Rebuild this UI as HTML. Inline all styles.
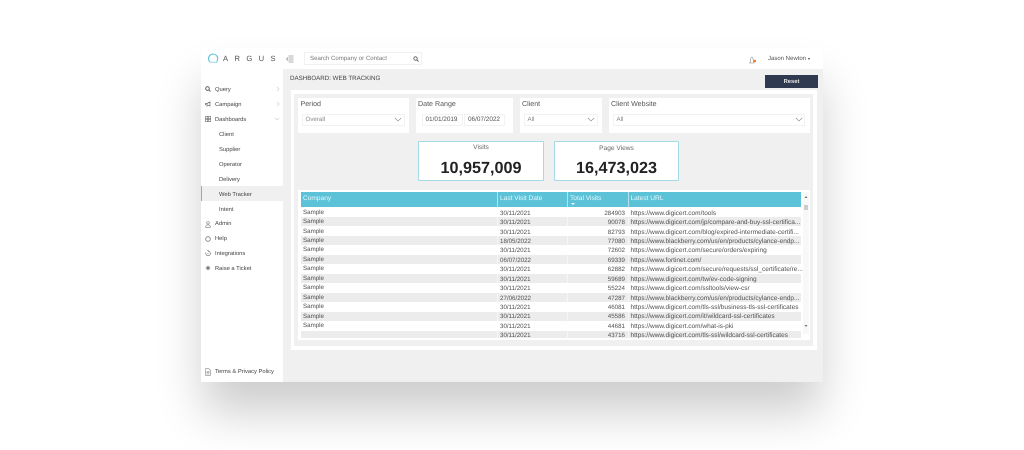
<!DOCTYPE html>
<html><head><meta charset="utf-8"><style>
html,body{margin:0;padding:0;background:#fff}
body{width:1024px;height:450px;overflow:hidden;position:relative;font-family:"Liberation Sans",sans-serif;color:#444;text-rendering:geometricPrecision}
div,svg{position:absolute}
.wrap{left:0;top:0;width:1024px;height:450px;filter:blur(.3px)}
.t{white-space:nowrap;line-height:10px;transform:translateY(1px)}
.nav{font-size:5.8px;color:#444}
.card{background:#fff}
.lab{font-size:7.1px;color:#555}
.sel{background:#fff;border:1px solid #f2f2f2;box-sizing:border-box;height:12px}
.v{font-size:6.2px;color:#888}
.kpi{background:#fff;border:1px solid #a5dbe6;border-radius:1px;box-sizing:border-box;top:141px;height:40px}
.num{font-weight:bold;font-size:16.2px;color:#222;text-align:center;width:100%;top:17px;line-height:18px;transform:none}
.kt{font-size:6.6px;color:#666;text-align:center;width:100%;line-height:10px}
.hd{font-size:6.6px;color:#e9f8fb;top:193px}
.rowbg{left:301px;width:500px;height:9.5px;background:#ececec}
.r{font-size:6.2px;color:#505050}
.u{font-size:6.5px;color:#505050;left:630.5px}
</style></head><body>
<div class="wrap">
<div style="left:201px;top:48px;width:622px;height:334px;background:#f0f0f0;box-shadow:0 32px 44px -2px rgba(0,0,0,.2)"></div>
<div style="left:201px;top:48px;width:622px;height:21px;background:#fff"></div>
<div style="left:201px;top:69px;width:82px;height:313px;background:#fff"></div>

<!-- header -->
<svg style="left:207px;top:52px" width="12" height="12" viewBox="0 0 12 12"><path d="M3 10 A4.6 4.6 0 1 1 9.6 9.6" fill="none" stroke="#59c3db" stroke-width="1.1"/><path d="M3 10.2H10.5" stroke="#59c3db" stroke-width=".6"/></svg>
<div class="t" style="left:223px;top:53px;font-size:7.6px;letter-spacing:6.4px;color:#555">ARGUS</div>
<svg style="left:286px;top:55px" width="8" height="8" viewBox="0 0 8 8"><path d="M2.5 1H7.5M2.5 3H7.5M2.5 5H7.5M2.5 7H7.5M2 2.5L.5 4L2 5.5" fill="none" stroke="#666" stroke-width=".55"/></svg>
<div style="left:304px;top:52px;width:118px;height:13px;background:#fff;border:1px solid #f1f1f1;box-sizing:border-box"></div>
<div class="t" style="left:310px;top:53px;font-size:6.1px;color:#777">Search Company or Contact</div>
<svg style="left:413px;top:55.5px" width="6" height="6" viewBox="0 0 6 6"><circle cx="2.5" cy="2.5" r="1.7" fill="none" stroke="#555" stroke-width=".8"/><path d="M3.8 3.8L5.5 5.5" stroke="#555" stroke-width=".9"/></svg>
<svg style="left:748px;top:56px" width="10" height="8" viewBox="0 0 10 8"><path d="M1 7H6.5M2 6.8C2.8 5 2.3 1 3.9 1C5.3 1 5 5 6 6.8" fill="none" stroke="#888" stroke-width=".6"/><circle cx="6.8" cy="5" r="1.3" fill="#f07a20"/></svg>
<div class="t" style="left:768px;top:53px;font-size:6px;color:#555">Jason Newton</div>
<div style="left:808px;top:58px;width:0;height:0;border:1.5px solid transparent;border-top:2px solid #444"></div>

<!-- sidebar -->
<svg style="left:205px;top:86px" width="6" height="6" viewBox="0 0 6 6"><circle cx="2.5" cy="2.5" r="1.8" fill="none" stroke="#555" stroke-width=".9"/><path d="M3.8 3.8L5.5 5.5" stroke="#555" stroke-width=".9"/></svg>
<svg style="left:205px;top:101px" width="6" height="6" viewBox="0 0 6 6"><path d="M.5 2.5H2L5 1V5L2 3.8H.5Z M2 4V5.5" fill="none" stroke="#666" stroke-width=".7"/></svg>
<svg style="left:205px;top:116px" width="6" height="6" viewBox="0 0 6 6"><path d="M.3.3H2.700V2.700H.3ZM3.300.3H5.700V2.700H3.300ZM.3 3.300H2.700V5.700H.3ZM3.300 3.300H5.700V5.700H3.300Z" fill="none" stroke="#777" stroke-width=".6"/></svg>
<svg style="left:205px;top:221px" width="6" height="7" viewBox="0 0 6 7"><circle cx="3" cy="1.8" r="1.3" fill="none" stroke="#777" stroke-width=".6"/><path d="M.6 6.3C.6 3 5.4 3 5.4 6.3Z" fill="none" stroke="#777" stroke-width=".6"/></svg>
<svg style="left:205px;top:235.5px" width="6" height="6" viewBox="0 0 6 6"><circle cx="3" cy="3" r="2.3" fill="none" stroke="#777" stroke-width=".8"/></svg>
<svg style="left:205px;top:250px" width="6" height="7" viewBox="0 0 6 7"><path d="M3 1.2A2.300 2.300 0 1 1 1 2.500M2 .5H4M2.200 3.500H3.700" fill="none" stroke="#666" stroke-width=".6"/></svg>
<svg style="left:205px;top:265px" width="6" height="6" viewBox="0 0 6 6"><circle cx="3" cy="3" r="1.5" fill="#555"/><path d="M3 .4V5.600M.4 3H5.600M1.200 1.200L4.800 4.800M4.800 1.200L1.200 4.800" stroke="#888" stroke-width=".4"/></svg>
<svg style="left:205px;top:368px" width="6" height="8" viewBox="0 0 6 8"><path d="M.5 .7H3.800L5.500 2.400V7.300H.5ZM1.500 3.500H4.500M1.500 4.700H4.500M1.500 5.900H4.500" fill="none" stroke="#888" stroke-width=".6"/></svg>
<svg style="left:276px;top:86px" width="4" height="6" viewBox="0 0 4 6"><path d="M1 .8L3 3L1 5.200" fill="none" stroke="#ccc" stroke-width=".6"/></svg>
<svg style="left:276px;top:101px" width="4" height="6" viewBox="0 0 4 6"><path d="M1 .8L3 3L1 5.200" fill="none" stroke="#ccc" stroke-width=".6"/></svg>
<svg style="left:274px;top:117px" width="6" height="4" viewBox="0 0 6 4"><path d="M.8 1L3 3L5.200 1" fill="none" stroke="#ccc" stroke-width=".6"/></svg>

<div class="t nav" style="left:215px;top:83.5px">Query</div>
<div class="t nav" style="left:215px;top:98.5px">Campaign</div>
<div class="t nav" style="left:215px;top:113.5px">Dashboards</div>
<div class="t nav" style="left:219px;top:128.5px">Client</div>
<div class="t nav" style="left:219px;top:143.5px">Supplier</div>
<div class="t nav" style="left:219px;top:158.5px">Operator</div>
<div class="t nav" style="left:219px;top:173.5px">Delivery</div>
<div style="left:201px;top:186px;width:82px;height:15px;background:#f0f0f0;border-left:1px solid #5ac0e0;box-sizing:border-box"></div>
<div class="t nav" style="left:219px;top:188.5px">Web Tracker</div>
<div class="t nav" style="left:219px;top:203.5px">Intent</div>
<div class="t nav" style="left:215px;top:218px">Admin</div>
<div class="t nav" style="left:215px;top:232.5px">Help</div>
<div class="t nav" style="left:215px;top:247.5px">Integrations</div>
<div class="t nav" style="left:215px;top:262.5px">Raise a Ticket</div>
<div class="t nav" style="left:215px;top:365.5px">Terms &amp; Privacy Policy</div>

<!-- title -->
<div class="t" style="left:290px;top:73px;font-size:6.2px;color:#444">DASHBOARD: WEB TRACKING</div>
<div class="t" style="left:765px;top:74px;width:53px;height:13px;line-height:14px;background:#2f3950;color:#e8e8e8;font-size:5.8px;font-weight:bold;text-align:center">Reset</div>

<!-- panel -->
<div style="left:291px;top:90px;width:526px;height:260px;background:#fff"></div>
<div style="left:294px;top:94px;width:519px;height:252px;background:#f0f0f0"></div>

<!-- filters -->
<div class="card" style="left:298px;top:98px;width:111px;height:35px"></div>
<div class="card" style="left:416px;top:98px;width:97px;height:35px"></div>
<div class="card" style="left:520px;top:98px;width:82px;height:35px"></div>
<div class="card" style="left:609px;top:98px;width:201px;height:35px"></div>
<div class="t lab" style="left:300.5px;top:98px">Period</div>
<div class="t lab" style="left:418px;top:98px">Date Range</div>
<div class="t lab" style="left:522px;top:98px">Client</div>
<div class="t lab" style="left:611px;top:98px">Client Website</div>
<div class="sel" style="left:302px;top:113.5px;width:103px"></div>
<div class="sel" style="left:422px;top:113.5px;width:41px"></div>
<div class="sel" style="left:464px;top:113.5px;width:41px"></div>
<div class="sel" style="left:524px;top:113.5px;width:74px"></div>
<div class="sel" style="left:613px;top:113.5px;width:192px"></div>
<div class="t v" style="left:305.5px;top:114px">Overall</div>
<div class="t" style="left:425.5px;top:114px;font-size:6.4px;color:#555">01/01/2019</div>
<div class="t" style="left:468px;top:114px;font-size:6.4px;color:#555">06/07/2022</div>
<div class="t v" style="left:527.5px;top:114px">All</div>
<div class="t v" style="left:616.5px;top:114px">All</div>
<svg style="left:394px;top:117px" width="8" height="5" viewBox="0 0 8 5"><path d="M.8 1L4 4L7.200 1" fill="none" stroke="#888" stroke-width=".6"/></svg>
<svg style="left:587px;top:117px" width="8" height="5" viewBox="0 0 8 5"><path d="M.8 1L4 4L7.200 1" fill="none" stroke="#888" stroke-width=".6"/></svg>
<svg style="left:795px;top:117px" width="8" height="5" viewBox="0 0 8 5"><path d="M.8 1L4 4L7.200 1" fill="none" stroke="#888" stroke-width=".6"/></svg>

<!-- KPI -->
<div class="kpi" style="left:418px;width:126px"><div class="kt" style="top:1px">Visits</div><div class="t num">10,957,009</div></div>
<div class="kpi" style="left:554px;width:125px"><div class="kt" style="top:2px">Page Views</div><div class="t num">16,473,023</div></div>

<!-- table -->
<div style="left:298px;top:190px;width:512px;height:150px;background:#fff"></div>
<div style="left:301px;top:192px;width:500px;height:15px;background:#5bc2d8"></div>
<div class="rowbg" style="top:216.5px"></div>
<div class="rowbg" style="top:235.5px"></div>
<div class="rowbg" style="top:254.5px"></div>
<div class="rowbg" style="top:273.5px"></div>
<div class="rowbg" style="top:292.5px"></div>
<div class="rowbg" style="top:311.5px"></div>
<div class="rowbg" style="top:330.5px;height:7.5px"></div>
<div style="left:497px;top:192px;width:.7px;height:146px;background:rgba(255,255,255,.55)"></div>
<div style="left:567px;top:192px;width:.7px;height:146px;background:rgba(255,255,255,.55)"></div>
<div style="left:628px;top:192px;width:.7px;height:146px;background:rgba(255,255,255,.55)"></div>
<div class="t hd" style="left:303px">Company</div>
<div class="t hd" style="left:500px">Last Visit Date</div>
<div class="t hd" style="left:570px">Total Visits</div>
<div class="t hd" style="left:630.5px">Latest URL</div>
<div style="left:571px;top:203px;width:0;height:0;border:2px solid transparent;border-top:2.5px solid #fff"></div>
<div style="left:803px;top:192px;width:6px;height:142px;background:#f8f8f8"></div>
<svg style="left:803px;top:193px" width="6" height="138" viewBox="0 0 6 138"><path d="M1.5 5L3 3L4.5 5Z" fill="#777"/><rect x="1" y="12" width="4" height="5" fill="#ccc"/><path d="M1.5 132L3 134L4.5 132Z" fill="#777"/></svg>

<div class="t r" style="left:303px;top:207px">Sample</div>
<div class="t r" style="left:303px;top:216px">Sample</div>
<div class="t r" style="left:303px;top:225.5px">Sample</div>
<div class="t r" style="left:303px;top:235px">Sample</div>
<div class="t r" style="left:303px;top:244px">Sample</div>
<div class="t r" style="left:303px;top:253.5px">Sample</div>
<div class="t r" style="left:303px;top:263px">Sample</div>
<div class="t r" style="left:303px;top:272.5px">Sample</div>
<div class="t r" style="left:303px;top:282px">Sample</div>
<div class="t r" style="left:303px;top:292px">Sample</div>
<div class="t r" style="left:303px;top:301px">Sample</div>
<div class="t r" style="left:303px;top:310.5px">Sample</div>
<div class="t r" style="left:303px;top:320px">Sample</div>

<div class="t r" style="left:500px;top:207.5px">30/11/2021</div>
<div class="t r" style="left:500px;top:217px">30/11/2021</div>
<div class="t r" style="left:500px;top:226.5px">30/11/2021</div>
<div class="t r" style="left:500px;top:236px">18/05/2022</div>
<div class="t r" style="left:500px;top:245px">30/11/2021</div>
<div class="t r" style="left:500px;top:254.5px">06/07/2022</div>
<div class="t r" style="left:500px;top:264px">30/11/2021</div>
<div class="t r" style="left:500px;top:273.5px">30/11/2021</div>
<div class="t r" style="left:500px;top:283px">30/11/2021</div>
<div class="t r" style="left:500px;top:292.5px">27/06/2022</div>
<div class="t r" style="left:500px;top:301.5px">30/11/2021</div>
<div class="t r" style="left:500px;top:311px">30/11/2021</div>
<div class="t r" style="left:500px;top:320.5px">30/11/2021</div>
<div class="t r" style="left:500px;top:330px">30/11/2021</div>

<div class="t r" style="right:399px;top:207.5px">284903</div>
<div class="t r" style="right:399px;top:217px">90078</div>
<div class="t r" style="right:399px;top:226.5px">82793</div>
<div class="t r" style="right:399px;top:236px">77080</div>
<div class="t r" style="right:399px;top:245px">72602</div>
<div class="t r" style="right:399px;top:254.5px">69339</div>
<div class="t r" style="right:399px;top:264px">62882</div>
<div class="t r" style="right:399px;top:273.5px">59689</div>
<div class="t r" style="right:399px;top:283px">55224</div>
<div class="t r" style="right:399px;top:292.5px">47287</div>
<div class="t r" style="right:399px;top:301.5px">46081</div>
<div class="t r" style="right:399px;top:311px">45586</div>
<div class="t r" style="right:399px;top:320.5px">44681</div>
<div class="t r" style="right:399px;top:330px">43716</div>

<div class="t u" style="top:207.5px">https://www.digicert.com/tools</div>
<div class="t u" style="top:217px">https://www.digicert.com/jp/compare-and-buy-ssl-certifica...</div>
<div class="t u" style="top:226.5px">https://www.digicert.com/blog/expired-intermediate-certifi...</div>
<div class="t u" style="top:236px">https://www.blackberry.com/us/en/products/cylance-endp...</div>
<div class="t u" style="top:245px">https://www.digicert.com/secure/orders/expiring</div>
<div class="t u" style="top:254.5px">https://www.fortinet.com/</div>
<div class="t u" style="top:264px">https://www.digicert.com/secure/requests/ssl_certificate/re...</div>
<div class="t u" style="top:273.5px">https://www.digicert.com/tw/ev-code-signing</div>
<div class="t u" style="top:283px">https://www.digicert.com/ssltools/view-csr</div>
<div class="t u" style="top:292.5px">https://www.blackberry.com/us/en/products/cylance-endp...</div>
<div class="t u" style="top:301.5px">https://www.digicert.com/tls-ssl/business-tls-ssl-certificates</div>
<div class="t u" style="top:311px">https://www.digicert.com/it/wildcard-ssl-certificates</div>
<div class="t u" style="top:320.5px">https://www.digicert.com/what-is-pki</div>
<div class="t u" style="top:330px">https://www.digicert.com/tls-ssl/wildcard-ssl-certificates</div>
</div>
</body></html>
